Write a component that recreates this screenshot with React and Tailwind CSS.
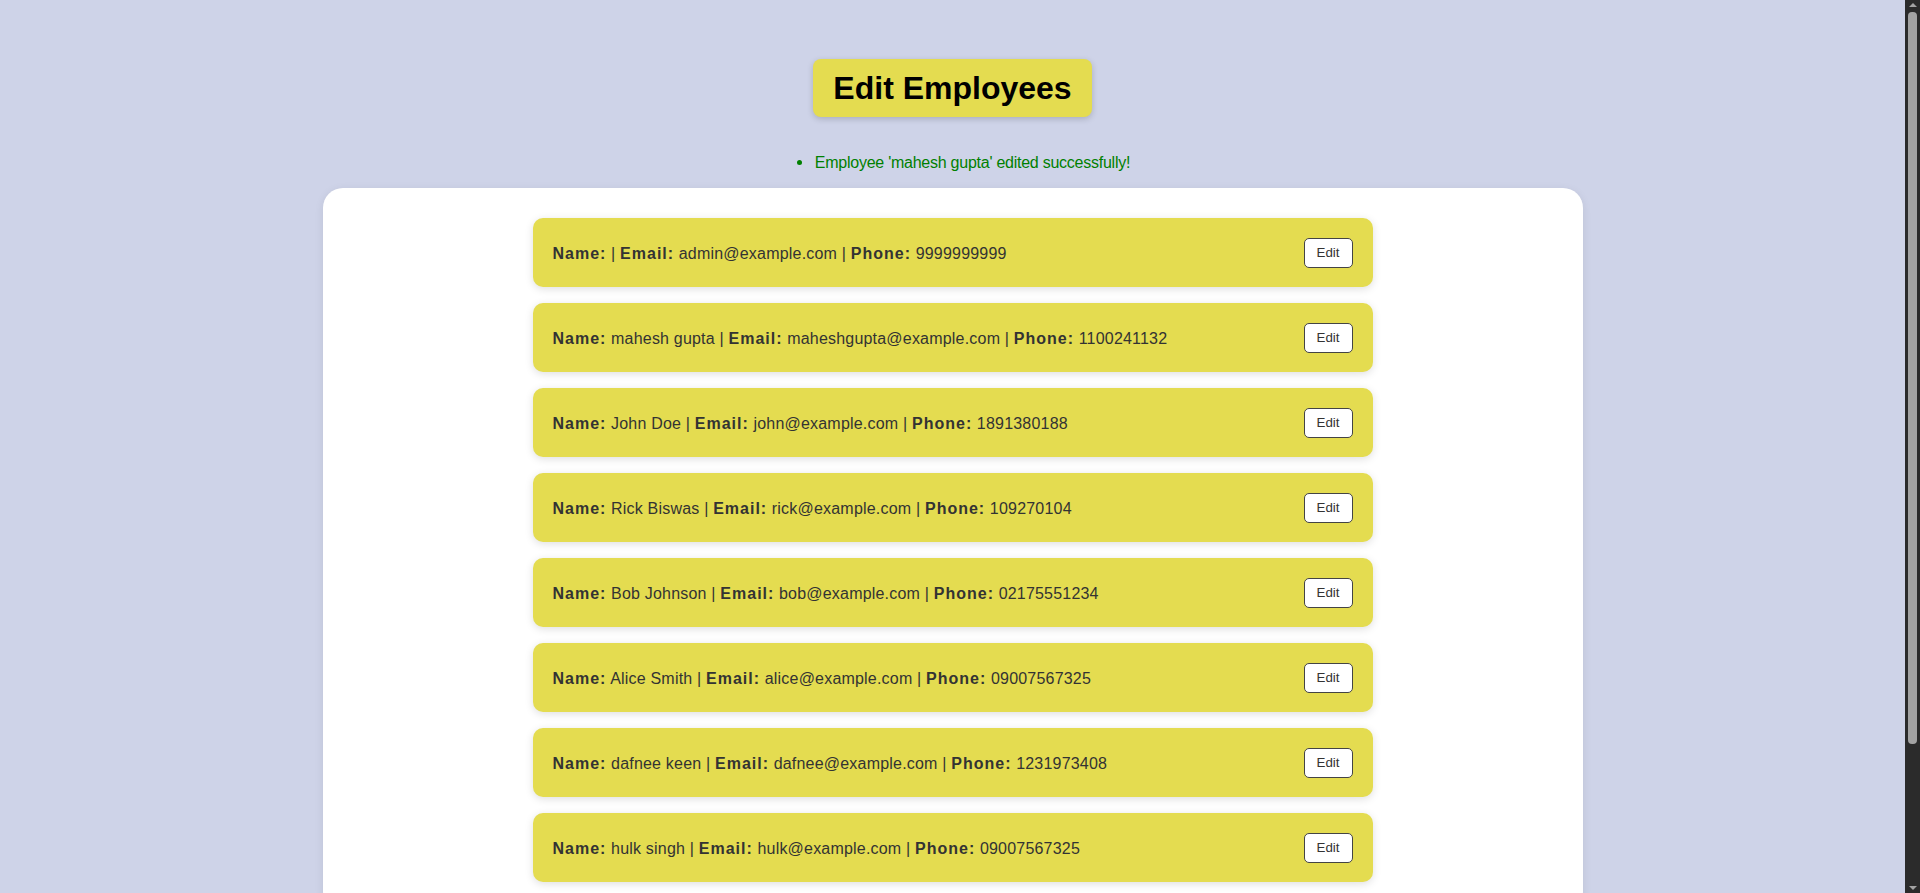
const employees = [
  { id: 1, name: '', email: 'admin@example.com', phone: '9999999999' },
  { id: 2, name: 'mahesh gupta', email: 'maheshgupta@example.com', phone: '1100241132' },
  { id: 3, name: 'John Doe', email: 'john@example.com', phone: '1891380188' },
  { id: 4, name: 'Rick Biswas', email: 'rick@example.com', phone: '109270104' },
  { id: 5, name: 'Bob Johnson', email: 'bob@example.com', phone: '02175551234' },
  { id: 6, name: 'Alice Smith', email: 'alice@example.com', phone: '09007567325' },
  { id: 7, name: 'dafnee keen', email: 'dafnee@example.com', phone: '1231973408' },
  { id: 8, name: 'hulk singh', email: 'hulk@example.com', phone: '09007567325' },
];

export default function App() {
  return (
    <div className="min-h-screen bg-[#ced3e8] pt-[59px] pb-10 pr-[15px] font-['Liberation_Sans',Arial,sans-serif]">
      {/* Header */}
      <div className="flex justify-center">
        <h1 className="bg-[#e4dc50] text-black text-[32px] font-bold leading-[38px] px-5 py-[10px] rounded-lg shadow-[0_2px_6px_rgba(0,0,0,0.18)]">
          Edit Employees
        </h1>
      </div>

      {/* Flash message */}
      <div className="flex justify-center pl-10 mt-[37px] h-[18px]">
        <span className="relative text-[16px] leading-[18px] tracking-[-0.25px] text-[#008000]">
          <span className="absolute left-[-18px] top-[6px] w-[5px] h-[5px] rounded-full bg-[#008000]" />
          Employee 'mahesh gupta' edited successfully!
        </span>
      </div>

      {/* List */}
      <div className="w-[1260px] mx-auto mt-[16px] bg-white rounded-[20px] pt-[30px] pb-[30px] shadow-[0_2px_10px_rgba(0,0,0,0.08)]">
        <div className="w-[840px] mx-auto flex flex-col gap-4">
          {employees.map((emp) => (
            <div
              key={emp.id}
              className="h-[69px] flex items-center justify-between px-5 bg-[#e4dc50] rounded-[10px] shadow-[0_2px_8px_rgba(0,0,0,0.13)]"
            >
              <p className="pt-[3px] text-[16px] text-[#333] tracking-[0.2px]">
                <strong className="tracking-[1px]">Name:</strong> {emp.name} | <strong className="tracking-[1px]">Email:</strong> {emp.email} | <strong className="tracking-[1px]">Phone:</strong> {emp.phone}
              </p>
              <button className="w-[49px] h-[30px] bg-white border border-[#444] rounded-[5px] text-[13.33px] text-[#333]">
                Edit
              </button>
            </div>
          ))}
        </div>
      </div>

      {/* Scrollbar */}
      <div className="fixed right-0 top-0 w-[15px] h-screen bg-[#2b2b2b] flex flex-col items-center">
        <div className="w-0 h-0 mt-[3px] border-l-[4px] border-r-[4px] border-b-[4px] border-l-transparent border-r-transparent border-b-[#a3a3a3]" />
        <div className="w-[9px] h-[732px] mt-[5px] rounded-[4px] bg-[#a3a3a3]" />
        <div className="flex-1" />
        <div className="w-0 h-0 mb-[3px] border-l-[4px] border-r-[4px] border-t-[4px] border-l-transparent border-r-transparent border-t-[#a3a3a3]" />
      </div>
    </div>
  );
}
